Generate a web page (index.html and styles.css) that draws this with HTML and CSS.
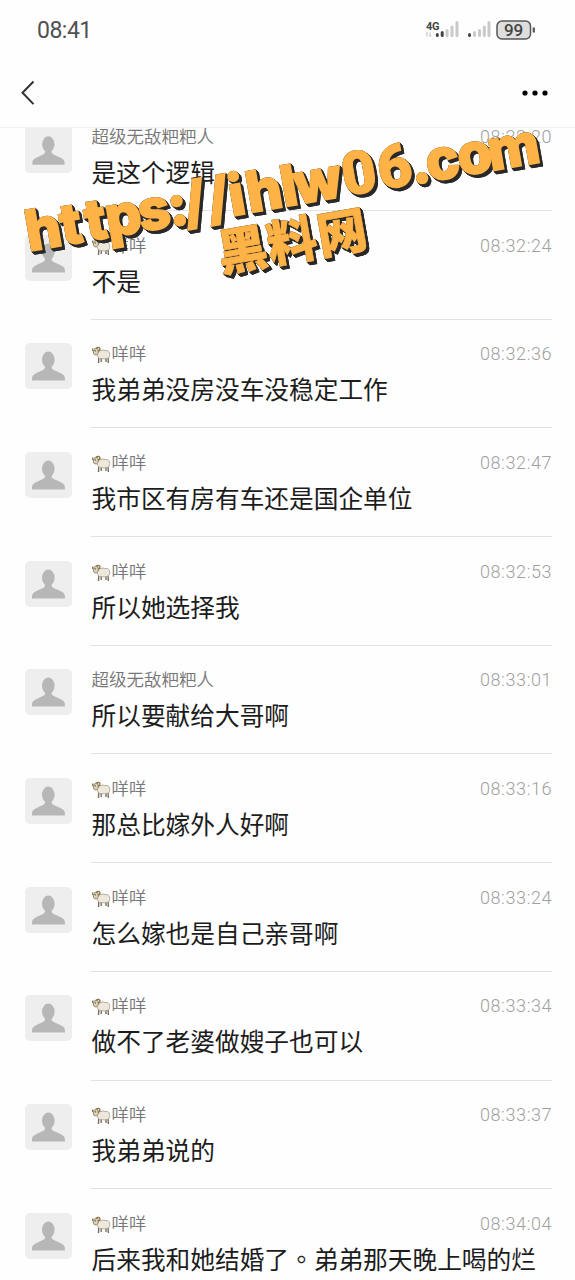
FILE: index.html
```html
<!DOCTYPE html>
<html lang="zh-CN">
<head>
<meta charset="utf-8">
<title>聊天记录</title>
<link rel="stylesheet" href="styles.css">
</head>
<body>
<svg class="defs" width="0" height="0" aria-hidden="true">
  <symbol id="person" viewBox="0 0 46 46">
    <ellipse cx="22.800" cy="16.700" rx="6.300" ry="8.200"/>
    <path d="M19.500 21h6.600v3.500c0 2.500 4.900 3.500 9.300 5.800 3 1.500 4 3 4 5.200v2H6.500v-2c0-2.200 1-3.700 4-5.200 4.200-2.300 9-3.300 9-5.800z"/>
  </symbol>
  <symbol id="sheep" viewBox="0 0 19 18">
    <path d="M6.800 10 6.500 17M9.200 12v4M16 11l.4 6M14 12v4" fill="none" stroke="#77705f" stroke-width="1.400"/>
    <path d="M5 5Q7 3.800 9 4.500q2-1 4 0 3.400-.6 4.200 1.500 1.200 2 .2 4.800-.8 2-3.200 1.700-2 .8-4.200.1-2.400.5-3.500-.8Q4.500 9.500 5 5z" fill="#eee8dc" stroke="#a99f8f" stroke-width=".8"/>
    <path d="M2 3.300Q3.800 1.300 6 2.800l.4 4.200-2.200 2-2-.5-.8-1.500z" fill="#ddd0b5" stroke="#7d725e" stroke-width=".8"/>
    <path d="M1 2.500Q0 4 1.200 5M4 2Q7.500.5 8 3 7.800 5.500 6 4.700" fill="none" stroke="#8c7544" stroke-width="1.300"/>
    <circle cx="3.300" cy="4.800" r=".6" fill="#333"/>
  </symbol>
</svg>
<div class="screen">
  <header class="top">
    <div class="status">
      <span class="clock">08:41</span>
      <svg class="indicators" width="112" height="24" viewBox="0 0 112 24">
        <text class="net" x="1" y="11.500" textLength="13.500">4G</text>
        <path d="M2 14.500v4M1 15.500l1-1M5 14.500v4l1-1" stroke="#bbb" fill="none"/>
        <g stroke-width="3" stroke-linecap="round">
          <path d="M12.300 16.500v1M17.200 14.500v3" stroke="#444"/>
          <path d="M22.100 12.500v5M27 9v8.500M32 4.500v13" stroke="#c9c9c9"/>
          <path d="M44.500 16.500v1" stroke="#444"/>
          <path d="M49.500 14.500v3M54.500 12.500v5M59.300 9v8.500M64 4.500v13" stroke="#c9c9c9"/>
        </g>
        <rect x="72" y="3" width="33.500" height="18" rx="5" fill="#dedede" stroke="#555" stroke-width="1.500"/>
        <path d="M108.800 9.500v5" stroke="#555" stroke-width="2.200"/>
        <text class="level" x="79 88.500" y="18">99</text>
      </svg>
    </div>
    <nav class="bar">
      <svg width="16" height="26" viewBox="0 0 16 26"><path d="M13.500 1.500 2.500 12.800l11 11.300" fill="none" stroke="#333" stroke-width="2"/></svg>
      <svg width="28" height="8" viewBox="0 0 28 8"><circle cx="4" cy="4" r="2.600"/><circle cx="14" cy="4" r="2.600"/><circle cx="24" cy="4" r="2.600"/></svg>
    </nav>
  </header>
  <main class="list">
    <article class="row"><svg class="avatar"><use href="#person"/></svg><div class="body"><div class="meta"><span class="name">超级无敌粑粑人</span><time>08:32:20</time></div><p>是这个逻辑</p></div></article>
    <article class="row"><svg class="avatar"><use href="#person"/></svg><div class="body"><div class="meta"><span class="name"><svg class="sheep"><use href="#sheep"/></svg>咩咩</span><time>08:32:24</time></div><p>不是</p></div></article>
    <article class="row"><svg class="avatar"><use href="#person"/></svg><div class="body"><div class="meta"><span class="name"><svg class="sheep"><use href="#sheep"/></svg>咩咩</span><time>08:32:36</time></div><p>我弟弟没房没车没稳定工作</p></div></article>
    <article class="row"><svg class="avatar"><use href="#person"/></svg><div class="body"><div class="meta"><span class="name"><svg class="sheep"><use href="#sheep"/></svg>咩咩</span><time>08:32:47</time></div><p>我市区有房有车还是国企单位</p></div></article>
    <article class="row"><svg class="avatar"><use href="#person"/></svg><div class="body"><div class="meta"><span class="name"><svg class="sheep"><use href="#sheep"/></svg>咩咩</span><time>08:32:53</time></div><p>所以她选择我</p></div></article>
    <article class="row"><svg class="avatar"><use href="#person"/></svg><div class="body"><div class="meta"><span class="name">超级无敌粑粑人</span><time>08:33:01</time></div><p>所以要献给大哥啊</p></div></article>
    <article class="row"><svg class="avatar"><use href="#person"/></svg><div class="body"><div class="meta"><span class="name"><svg class="sheep"><use href="#sheep"/></svg>咩咩</span><time>08:33:16</time></div><p>那总比嫁外人好啊</p></div></article>
    <article class="row"><svg class="avatar"><use href="#person"/></svg><div class="body"><div class="meta"><span class="name"><svg class="sheep"><use href="#sheep"/></svg>咩咩</span><time>08:33:24</time></div><p>怎么嫁也是自己亲哥啊</p></div></article>
    <article class="row"><svg class="avatar"><use href="#person"/></svg><div class="body"><div class="meta"><span class="name"><svg class="sheep"><use href="#sheep"/></svg>咩咩</span><time>08:33:34</time></div><p>做不了老婆做嫂子也可以</p></div></article>
    <article class="row"><svg class="avatar"><use href="#person"/></svg><div class="body"><div class="meta"><span class="name"><svg class="sheep"><use href="#sheep"/></svg>咩咩</span><time>08:33:37</time></div><p>我弟弟说的</p></div></article>
    <article class="row"><svg class="avatar"><use href="#person"/></svg><div class="body"><div class="meta"><span class="name"><svg class="sheep"><use href="#sheep"/></svg>咩咩</span><time>08:34:04</time></div><p>后来我和她结婚了<span class="stop" lang="zh-TW">。</span>弟弟那天晚上喝的烂</p></div></article>
  </main>
  <svg class="watermark" width="575" height="300" viewBox="0 0 575 300">
    <g class="lettering">
      <text class="url" transform="translate(31 251) rotate(-9.900)" x="-2 33 58 79 112 142 158 182 204 222 257 270 319 355 388 404 436 467">https<tspan class="square">:</tspan>//ihlw<tspan class="digits">06</tspan><tspan class="square">.</tspan>com</text>
      <text class="site" transform="translate(221 272) rotate(-9.900)" x="0 50 101">黑料网</text>
    </g>
  </svg>
</div>
</body>
</html>
```
FILE: styles.css
```css
* { box-sizing: border-box; }
body { margin: 0; background: #fefefe; font-family: Roboto, "Noto Sans CJK SC", sans-serif; }
.defs { position: absolute; }
.screen { position: relative; width: 575px; height: 1280px; overflow: hidden; display: flex; flex-direction: column; }
.top { flex: none; height: 128px; border-bottom: 1px solid #f1f1f1; }
.status { display: flex; justify-content: space-between; align-items: center; height: 60px; padding: 0 38px 0 37px; }
.clock { font-size: 23px; letter-spacing: -0.5px; color: #505050; }
.net { font: 700 11px Roboto, sans-serif; fill: #444; }
.level { font: 500 17px Roboto, sans-serif; fill: #444; }
.bar { display: flex; justify-content: space-between; align-items: center; height: 66px; padding: 0 26px 0 20px; }
.list { flex: 1; min-height: 0; overflow: hidden; }
.row { display: flex; gap: 19px; height: 108.7px; padding: 23.5px 23px 0 25px; }
.row:first-child { height: 83px; padding-top: 0; }
.avatar { flex: none; width: 47px; height: 46px; border-radius: 5px; background: #eee; fill: #b7b7b7; }
.row:first-child .avatar { height: 45px; border-top-left-radius: 0; border-top-right-radius: 0; }
.body { flex: 1; border-bottom: 1px solid #e2e2e2; white-space: nowrap; padding: 1px 0 0 0.5px; }
.row:first-child .body { padding-top: 0; }
.row:last-child .body { border-bottom: 0; }
.meta { display: flex; justify-content: space-between; align-items: center; height: 20px; }
.row:first-child .meta { height: 18px; }
.name { display: flex; align-items: center; gap: 1px; font-size: 17.5px; line-height: 20px; font-weight: 350; color: #777; }
.sheep { width: 19px; height: 18px; position: relative; top: 1px; }
time { font-size: 18px; line-height: 20px; font-weight: 300; letter-spacing: 0.6px; margin-right: -0.2px; color: #a0a0a0; }
p { margin: 10px 0 0; font-size: 24.7px; line-height: 34px; height: 34px; color: #1c1c1c; }
.stop { font-family: "Noto Sans CJK TC", sans-serif; line-height: 0; }
.row:first-child p { margin-top: 11px; }
.watermark { position: absolute; left: 0; top: 0; overflow: visible; }
.lettering { fill: #ffb347; stroke: #ffb347; filter: drop-shadow(0 0 0.5px #222) drop-shadow(1px 1px 0 #292929) drop-shadow(1px 1px 0 #292929) drop-shadow(1px 1px 0 #292929); }
.url { font: 800 56px Inter, sans-serif; stroke-width: 2px; }
.square { font-optical-sizing: none; font-variation-settings: "opsz" 14; }
.digits { font: 900 60px Roboto, sans-serif; stroke-width: 1px; }
.site { font: 900 50px "Noto Sans CJK SC", sans-serif; stroke-width: 0.6px; }
```
